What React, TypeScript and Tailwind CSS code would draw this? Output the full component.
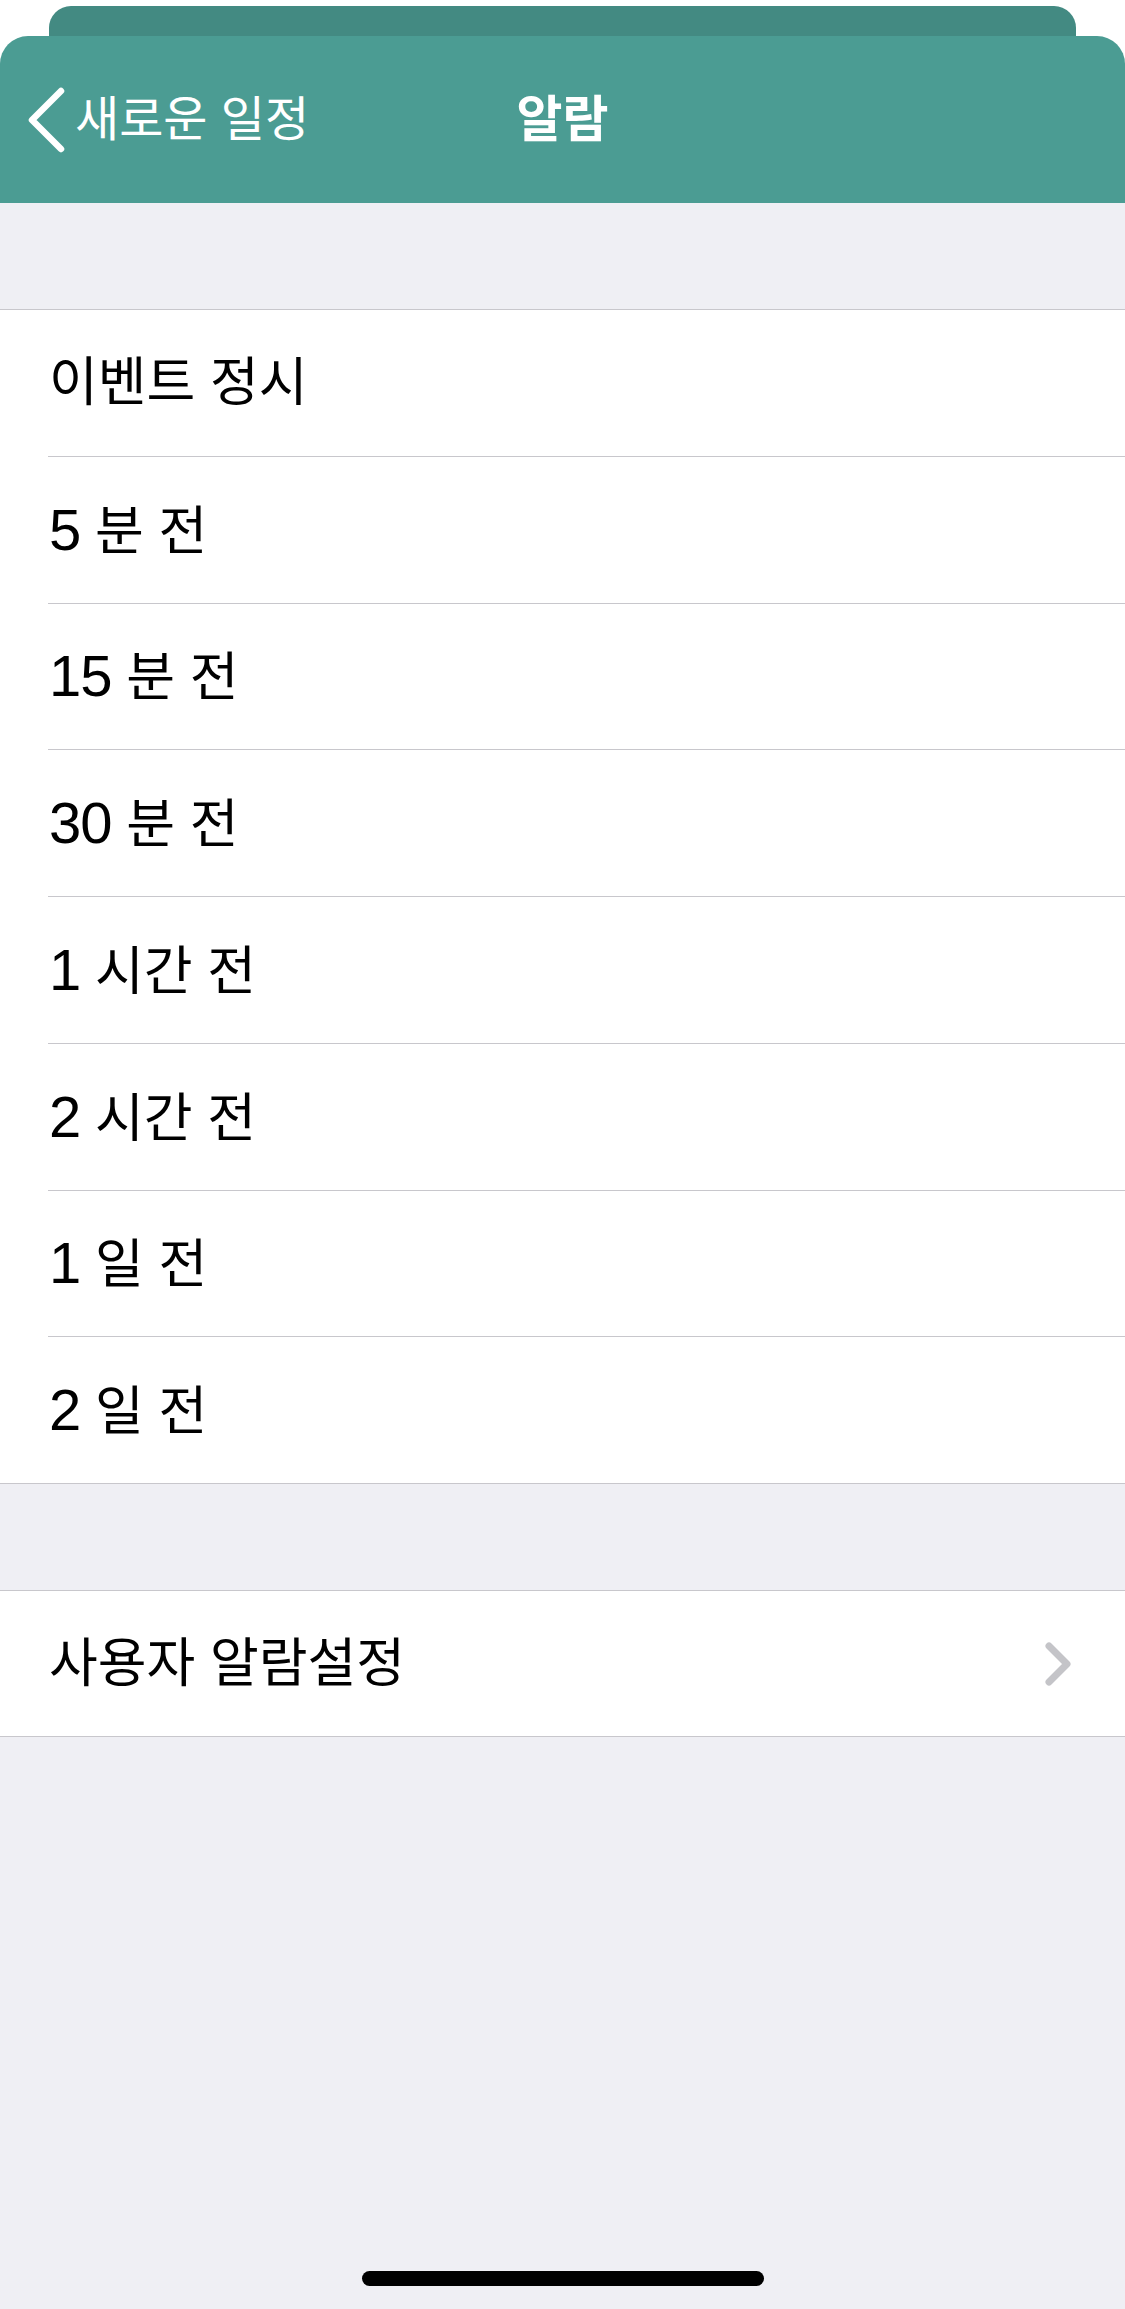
const font = "font-['Liberation_Sans','Noto_Sans_CJK_KR',sans-serif]"

const presets = ['이벤트 정시', '5 분 전', '15 분 전', '30 분 전', '1 시간 전', '2 시간 전', '1 일 전', '2 일 전']

// digits in the reference are taller than the hangul font's, so bump them up
function Label({ text }: { text: string }) {
  return (
    <span className="flex-1 leading-none">
      {text.split(/(\d+)/).map((part, i) =>
        /^\d+$/.test(part) ? (
          <span key={i} className="text-[58px] tracking-[-1px]">{part}</span>
        ) : (
          <span key={i}>{part}</span>
        )
      )}
    </span>
  )
}

function Row({ label, last }: { label: string; last?: boolean }) {
  return (
    <>
      <div className="h-[145.75px] flex items-center pl-[49px] pr-[56px] text-[53px] text-black">
        <Label text={label} />
      </div>
      {!last && <div className="ml-[48px] h-px bg-[#c8c7cc]" />}
    </>
  )
}

export default function App() {
  return (
    <div className={`w-[1125px] h-[2309px] flex flex-col bg-[#efeff4] ${font}`}>
      {/* stacked sheet header */}
      <div className="bg-white pt-[6px]">
        <div className="mx-[49px] h-[30px] rounded-t-[22px] bg-[#438a82]" />
        <div className="h-[167px] rounded-t-[28px] bg-[#4b9c93] grid grid-cols-[1fr_auto_1fr] items-center text-white">
          <div className="flex items-center pl-[26px]">
            <svg width="40" height="66" viewBox="0 0 40 66" fill="none">
              <path d="M35 4L6 33L35 62" stroke="white" strokeWidth="6.5" strokeLinecap="round" strokeLinejoin="round" />
            </svg>
            <span className="ml-[9px] text-[48px] leading-none">새로운 일정</span>
          </div>
          <div className="text-[50px] font-semibold leading-none">알람</div>
          <div />
        </div>
      </div>

      <div className="h-[106px]" />

      <div className="bg-white border-y border-[#c8c7cc]">
        {presets.map((p, i) => (
          <Row key={p} label={p} last={i === presets.length - 1} />
        ))}
      </div>

      <div className="h-[106px]" />

      <div className="bg-white border-y border-[#c8c7cc]">
        <div className="h-[145px] flex items-center pl-[49px] pr-[54px] text-[53px] text-black">
          <span className="flex-1 leading-none">사용자 알람설정</span>
          <svg width="26" height="44" viewBox="0 0 26 44" fill="none">
            <path d="M4 4L22 22L4 40" stroke="#c4c4c8" strokeWidth="7" strokeLinecap="round" strokeLinejoin="round" />
          </svg>
        </div>
      </div>

      <div className="flex-1" />
      <div className="flex justify-center pb-[23px]">
        <div className="w-[402px] h-[15px] rounded-full bg-black" />
      </div>
    </div>
  )
}
